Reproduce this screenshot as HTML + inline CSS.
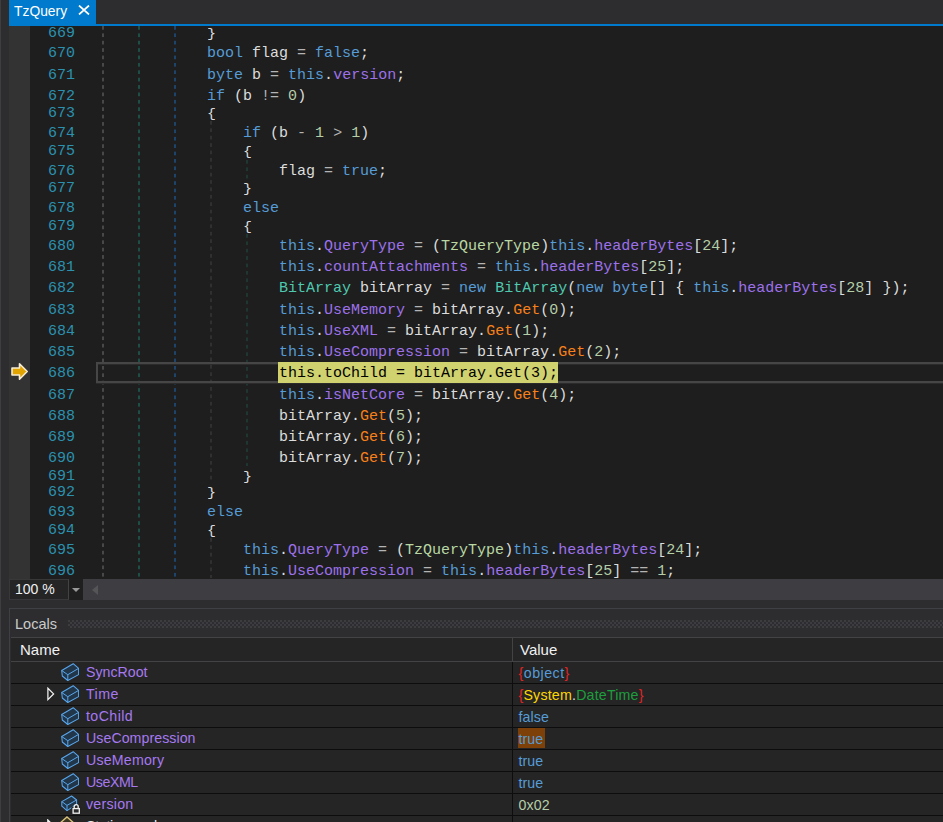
<!DOCTYPE html>
<html><head><meta charset="utf-8"><title>TzQuery</title>
<style>
html,body{margin:0;padding:0;}
body{width:943px;height:822px;overflow:hidden;background:#2d2d30;position:relative;font-family:"Liberation Sans",sans-serif;}
i{font-style:normal}
#edge{position:absolute;left:0;top:0;width:1px;height:822px;background:#3e3e42}
#tab{position:absolute;left:9px;top:0;width:87px;height:24px;background:#007acc;color:#fff;font-size:14.5px;line-height:22px;}
#tab span{position:absolute;left:5px;top:0px;transform:scaleX(.955);transform-origin:0 50%}
#tabx{position:absolute;left:69px;top:5px;width:12px;height:10px}
#tabline{position:absolute;left:9px;top:24px;width:934px;height:2px;background:#007acc}
#gutter{position:absolute;left:9px;top:26px;width:21px;height:553px;background:#333333}
#code{position:absolute;left:30px;top:26px;width:913px;height:553px;background:#1e1e1e}
.ln,.cl{position:absolute;font-family:"Liberation Mono",monospace;font-size:15px;line-height:20px;height:20px;white-space:pre;}
.ln{left:48px;color:#2b91af}
.cl{color:#dcdcdc}
.b{display:inline-block;transform:scaleY(.88);transform-origin:50% 80%}
.k{color:#569cd6}.p{color:#dcdcdc}.o{color:#b4b4b4}.n{color:#b5cea8}.f{color:#9d71ea}.m{color:#f8801a}.c{color:#4ec9b0}.e{color:#b8d7a3}.l{color:#dcdcdc}
.g{position:absolute;width:2px;background-size:2px 7.4px}
.g1{background-image:linear-gradient(#484848 0,#484848 3.9px,transparent 3.9px)}
.g2{background-image:linear-gradient(#1d4f47 0,#1d4f47 3.9px,transparent 3.9px)}
.g3{background-image:linear-gradient(#1d446a 0,#1d446a 3.9px,transparent 3.9px)}
.g4{background-image:linear-gradient(#303030 0,#303030 3.9px,transparent 3.9px)}
.g5{background-image:linear-gradient(#1f3632 0,#1f3632 3.9px,transparent 3.9px)}
#curline{position:absolute;left:96px;top:362px;width:860px;height:17px;border:2px solid #464646;box-shadow:inset 0 1px 0 #2b2b2b,0 1px 0 #2b2b2b;}
.hl{position:absolute;top:362px;height:21px;background:#d0d16f}
.hlt{color:#000}
#arrow{position:absolute;left:10px;top:362px;width:19px;height:19px}
/* zoom bar */
#zoombox{position:absolute;left:9px;top:579px;width:58px;height:19px;background:#252526;border:1px solid #38383b;border-right-color:#434346;color:#f1f1f1;font-size:14px;line-height:19px}
#zoombox span{position:absolute;left:5px;top:0}
#zoomdd{position:absolute;left:69px;top:579px;width:14px;height:21px;background:#1f1f20}
#zoomdd:after{content:"";position:absolute;left:3px;top:9px;border:4px solid transparent;border-top:4px solid #999;border-bottom:0}
#hscroll{position:absolute;left:83px;top:579px;width:860px;height:21px;background:#3e3e42}
#hscroll:after{content:"";position:absolute;left:9px;top:6px;border:5px solid transparent;border-right:6px solid #555558;border-left:0}
/* locals */
#locals{position:absolute;left:9px;top:608px;width:940px;height:230px;border:1px solid #3f3f46;background:#2d2d30;box-sizing:border-box}
#ltitle{position:absolute;left:15px;top:613px;font-size:14.5px;line-height:22px;color:#cacaca}
#grip{position:absolute;left:68px;top:620px;width:880px;height:8px;background-image:radial-gradient(circle at 1px 1px,#5a5a5f 0.6px,transparent 1.0px),radial-gradient(circle at 3px 3px,#5a5a5f 0.6px,transparent 1.0px);background-size:4px 4px;opacity:.5}
#table{position:absolute;left:11px;top:637px;width:940px;height:190px;background:#252526}
#hdr{position:absolute;left:11px;top:637px;width:940px;height:23px;border-top:1px solid #434345;border-bottom:1px solid #434345;background:#252526;color:#f1f1f1;font-size:15px;line-height:24px}
#hdr .h1{position:absolute;left:9px;top:0}
#hdr .h2{position:absolute;left:509px;top:0}
#hdr .sep{position:absolute;left:501px;top:0;width:1px;height:23px;background:#434345}
.row{position:absolute;left:11px;width:940px;height:21px;border-bottom:1px solid #0d0d0d;font-size:14.2px;line-height:21px;white-space:nowrap}
.row .ic{position:absolute;left:50px;top:1px;width:18px;height:18px}
.row .tri{position:absolute;left:36px;top:2.5px;width:8px;height:14px}
.row .nm{position:absolute;left:75px;top:0;color:#a679f0}
.row .val{position:absolute;left:507.5px;top:1px}
#colsep{position:absolute;left:512px;top:662px;width:1px;height:170px;background:#0d0d0d}
.br{color:#e02424}.ns{color:#ffd700}.vt{color:#1e9e3c}
.chg{background:#7c4008;display:inline-block;height:20px;padding:0 1.5px 0 1px;margin-left:-1px;margin-top:-1px;vertical-align:top;line-height:22px}
</style></head><body>
<div id="edge"></div>
<div id="code"></div>
<div id="gutter"></div>
<div id="tab"><span>TzQuery</span><svg id="tabx" viewBox="0 0 12 10"><path d="M1 0.5 L11 9.5 M11 0.5 L1 9.5" stroke="#fff" stroke-width="1.7" fill="none"/></svg></div>
<div id="tabline"></div>
<div class="g g1" style="left:102px;top:26px;height:552px"></div>
<div class="g g2" style="left:138px;top:26px;height:552px"></div>
<div class="g g3" style="left:174px;top:26px;height:552px"></div>
<div class="g g4" style="left:210px;top:121px;height:361px"></div>
<div class="g g4" style="left:210px;top:538px;height:40px"></div>
<div class="g g5" style="left:246px;top:160px;height:19px"></div>
<div class="g g5" style="left:246px;top:234px;height:232px"></div>
<div id="curline"></div>
<div class="ln" style="top:24.0px">669</div>
<div class="cl" style="top:24.0px;left:207.0px"><i class="p b">}</i></div>
<div class="ln" style="top:44.0px">670</div>
<div class="cl" style="top:44.0px;left:207.0px"><i class="k">bool</i> <i class="l">flag</i> <i class="o">=</i> <i class="k">false</i><i class="p">;</i></div>
<div class="ln" style="top:66.0px">671</div>
<div class="cl" style="top:66.0px;left:207.0px"><i class="k">byte</i> <i class="l">b</i> <i class="o">=</i> <i class="k">this</i><i class="p">.</i><i class="f">version</i><i class="p">;</i></div>
<div class="ln" style="top:87.0px">672</div>
<div class="cl" style="top:87.0px;left:207.0px"><i class="k">if</i> <i class="p">(</i><i class="l">b</i> <i class="o">!=</i> <i class="n">0</i><i class="p">)</i></div>
<div class="ln" style="top:104.0px">673</div>
<div class="cl" style="top:104.0px;left:207.0px"><i class="p b">{</i></div>
<div class="ln" style="top:124.0px">674</div>
<div class="cl" style="top:124.0px;left:243.0px"><i class="k">if</i> <i class="p">(</i><i class="l">b</i> <i class="o">-</i> <i class="n">1</i> <i class="o">&gt;</i> <i class="n">1</i><i class="p">)</i></div>
<div class="ln" style="top:142.0px">675</div>
<div class="cl" style="top:142.0px;left:243.0px"><i class="p b">{</i></div>
<div class="ln" style="top:162.0px">676</div>
<div class="cl" style="top:162.0px;left:279.0px"><i class="l">flag</i> <i class="o">=</i> <i class="k">true</i><i class="p">;</i></div>
<div class="ln" style="top:179.0px">677</div>
<div class="cl" style="top:179.0px;left:243.0px"><i class="p b">}</i></div>
<div class="ln" style="top:199.0px">678</div>
<div class="cl" style="top:199.0px;left:243.0px"><i class="k">else</i></div>
<div class="ln" style="top:217.0px">679</div>
<div class="cl" style="top:217.0px;left:243.0px"><i class="p b">{</i></div>
<div class="ln" style="top:237.0px">680</div>
<div class="cl" style="top:237.0px;left:279.0px"><i class="k">this</i><i class="p">.</i><i class="f">QueryType</i> <i class="o">=</i> <i class="p">(</i><i class="e">TzQueryType</i><i class="p">)</i><i class="k">this</i><i class="p">.</i><i class="f">headerBytes</i><i class="p">[</i><i class="n">24</i><i class="p">]</i><i class="p">;</i></div>
<div class="ln" style="top:258.0px">681</div>
<div class="cl" style="top:258.0px;left:279.0px"><i class="k">this</i><i class="p">.</i><i class="f">countAttachments</i> <i class="o">=</i> <i class="k">this</i><i class="p">.</i><i class="f">headerBytes</i><i class="p">[</i><i class="n">25</i><i class="p">]</i><i class="p">;</i></div>
<div class="ln" style="top:279.0px">682</div>
<div class="cl" style="top:279.0px;left:279.0px"><i class="c">BitArray</i> <i class="l">bitArray</i> <i class="o">=</i> <i class="k">new</i> <i class="c">BitArray</i><i class="p">(</i><i class="k">new</i> <i class="k">byte</i><i class="p">[]</i> <i class="p">{</i> <i class="k">this</i><i class="p">.</i><i class="f">headerBytes</i><i class="p">[</i><i class="n">28</i><i class="p">]</i> <i class="p">});</i></div>
<div class="ln" style="top:301.0px">683</div>
<div class="cl" style="top:301.0px;left:279.0px"><i class="k">this</i><i class="p">.</i><i class="f">UseMemory</i> <i class="o">=</i> <i class="l">bitArray</i><i class="p">.</i><i class="m">Get</i><i class="p">(</i><i class="n">0</i><i class="p">);</i></div>
<div class="ln" style="top:322.0px">684</div>
<div class="cl" style="top:322.0px;left:279.0px"><i class="k">this</i><i class="p">.</i><i class="f">UseXML</i> <i class="o">=</i> <i class="l">bitArray</i><i class="p">.</i><i class="m">Get</i><i class="p">(</i><i class="n">1</i><i class="p">);</i></div>
<div class="ln" style="top:343.0px">685</div>
<div class="cl" style="top:343.0px;left:279.0px"><i class="k">this</i><i class="p">.</i><i class="f">UseCompression</i> <i class="o">=</i> <i class="l">bitArray</i><i class="p">.</i><i class="m">Get</i><i class="p">(</i><i class="n">2</i><i class="p">);</i></div>
<div class="ln" style="top:364.0px">686</div>
<div class="hl" style="left:278.0px;width:279.5px"></div>
<div class="cl hlt" style="top:364.0px;left:279.0px">this.toChild = bitArray.Get(3);</div>
<div class="ln" style="top:386.0px">687</div>
<div class="cl" style="top:386.0px;left:279.0px"><i class="k">this</i><i class="p">.</i><i class="f">isNetCore</i> <i class="o">=</i> <i class="l">bitArray</i><i class="p">.</i><i class="m">Get</i><i class="p">(</i><i class="n">4</i><i class="p">);</i></div>
<div class="ln" style="top:407.0px">688</div>
<div class="cl" style="top:407.0px;left:279.0px"><i class="l">bitArray</i><i class="p">.</i><i class="m">Get</i><i class="p">(</i><i class="n">5</i><i class="p">);</i></div>
<div class="ln" style="top:428.0px">689</div>
<div class="cl" style="top:428.0px;left:279.0px"><i class="l">bitArray</i><i class="p">.</i><i class="m">Get</i><i class="p">(</i><i class="n">6</i><i class="p">);</i></div>
<div class="ln" style="top:449.0px">690</div>
<div class="cl" style="top:449.0px;left:279.0px"><i class="l">bitArray</i><i class="p">.</i><i class="m">Get</i><i class="p">(</i><i class="n">7</i><i class="p">);</i></div>
<div class="ln" style="top:467.0px">691</div>
<div class="cl" style="top:467.0px;left:243.0px"><i class="p b">}</i></div>
<div class="ln" style="top:483.0px">692</div>
<div class="cl" style="top:483.0px;left:207.0px"><i class="p b">}</i></div>
<div class="ln" style="top:503.0px">693</div>
<div class="cl" style="top:503.0px;left:207.0px"><i class="k">else</i></div>
<div class="ln" style="top:521.0px">694</div>
<div class="cl" style="top:521.0px;left:207.0px"><i class="p b">{</i></div>
<div class="ln" style="top:541.0px">695</div>
<div class="cl" style="top:541.0px;left:243.0px"><i class="k">this</i><i class="p">.</i><i class="f">QueryType</i> <i class="o">=</i> <i class="p">(</i><i class="e">TzQueryType</i><i class="p">)</i><i class="k">this</i><i class="p">.</i><i class="f">headerBytes</i><i class="p">[</i><i class="n">24</i><i class="p">]</i><i class="p">;</i></div>
<div class="ln" style="top:562.0px">696</div>
<div class="cl" style="top:562.0px;left:243.0px"><i class="k">this</i><i class="p">.</i><i class="f">UseCompression</i> <i class="o">=</i> <i class="k">this</i><i class="p">.</i><i class="f">headerBytes</i><i class="p">[</i><i class="n">25</i><i class="p">]</i> <i class="o">==</i> <i class="n">1</i><i class="p">;</i></div>
<svg id="arrow" viewBox="0 0 19 19"><path d="M2 6 H9.5 V1.8 L17.2 9.5 L9.5 17.2 V13 H2 Z" fill="#e2a400" stroke="#f6ecd2" stroke-width="1.6" stroke-linejoin="round"/></svg>
<div id="zoombox"><span>100 %</span></div><div id="zoomdd"></div><div id="hscroll"></div>
<div id="locals"></div>
<div id="ltitle">Locals</div><div id="grip"></div>
<div id="table"></div>
<div id="hdr"><span class="h1">Name</span><span class="sep"></span><span class="h2">Value</span></div>
<div class="row" style="top:662px"><svg class="ic" viewBox="0 0 18 18"><path d="M0.7 7.5 L12.2 0.7 L17.6 5.4 L17.6 11.6 L6.8 17.5 L1.3 13.0 Z" fill="#223649" stroke="#58a7ee" stroke-width="1.05" stroke-linejoin="round"/><path d="M0.7 7.5 L6.8 11.7 L17.6 5.4 M6.8 11.7 L6.8 17.5" fill="none" stroke="#58a7ee" stroke-width="1.0" stroke-linejoin="round"/></svg><span class="nm" style="letter-spacing:0px">SyncRoot</span><span class="val" style="letter-spacing:0.5px"><i class="br">{</i><i class="k">object</i><i class="br">}</i></span></div>
<div class="row" style="top:684px"><svg class="tri" viewBox="0 0 8 14"><path d="M0.9 1.2 L6.6 6.9 L0.9 12.6 Z" fill="none" stroke="#f1f1f1" stroke-width="1.25"/></svg><svg class="ic" viewBox="0 0 18 18"><path d="M0.7 7.5 L12.2 0.7 L17.6 5.4 L17.6 11.6 L6.8 17.5 L1.3 13.0 Z" fill="#223649" stroke="#58a7ee" stroke-width="1.05" stroke-linejoin="round"/><path d="M0.7 7.5 L6.8 11.7 L17.6 5.4 M6.8 11.7 L6.8 17.5" fill="none" stroke="#58a7ee" stroke-width="1.0" stroke-linejoin="round"/></svg><span class="nm" style="letter-spacing:0.45px">Time</span><span class="val" style="letter-spacing:0.2px"><i class="br">{</i><i class="ns">System</i><i class="p">.</i><i class="vt">DateTime</i><i class="br">}</i></span></div>
<div class="row" style="top:706px"><svg class="ic" viewBox="0 0 18 18"><path d="M0.7 7.5 L12.2 0.7 L17.6 5.4 L17.6 11.6 L6.8 17.5 L1.3 13.0 Z" fill="#223649" stroke="#58a7ee" stroke-width="1.05" stroke-linejoin="round"/><path d="M0.7 7.5 L6.8 11.7 L17.6 5.4 M6.8 11.7 L6.8 17.5" fill="none" stroke="#58a7ee" stroke-width="1.0" stroke-linejoin="round"/></svg><span class="nm" style="letter-spacing:0.42px">toChild</span><span class="val" style="letter-spacing:0.1px"><i class="k">false</i></span></div>
<div class="row" style="top:728px"><svg class="ic" viewBox="0 0 18 18"><path d="M0.7 7.5 L12.2 0.7 L17.6 5.4 L17.6 11.6 L6.8 17.5 L1.3 13.0 Z" fill="#223649" stroke="#58a7ee" stroke-width="1.05" stroke-linejoin="round"/><path d="M0.7 7.5 L6.8 11.7 L17.6 5.4 M6.8 11.7 L6.8 17.5" fill="none" stroke="#58a7ee" stroke-width="1.0" stroke-linejoin="round"/></svg><span class="nm" style="letter-spacing:0.05px">UseCompression</span><span class="val" style="letter-spacing:0.1px"><i class="k chg">true</i></span></div>
<div class="row" style="top:750px"><svg class="ic" viewBox="0 0 18 18"><path d="M0.7 7.5 L12.2 0.7 L17.6 5.4 L17.6 11.6 L6.8 17.5 L1.3 13.0 Z" fill="#223649" stroke="#58a7ee" stroke-width="1.05" stroke-linejoin="round"/><path d="M0.7 7.5 L6.8 11.7 L17.6 5.4 M6.8 11.7 L6.8 17.5" fill="none" stroke="#58a7ee" stroke-width="1.0" stroke-linejoin="round"/></svg><span class="nm" style="letter-spacing:0.2px">UseMemory</span><span class="val" style="letter-spacing:0.1px"><i class="k">true</i></span></div>
<div class="row" style="top:772px"><svg class="ic" viewBox="0 0 18 18"><path d="M0.7 7.5 L12.2 0.7 L17.6 5.4 L17.6 11.6 L6.8 17.5 L1.3 13.0 Z" fill="#223649" stroke="#58a7ee" stroke-width="1.05" stroke-linejoin="round"/><path d="M0.7 7.5 L6.8 11.7 L17.6 5.4 M6.8 11.7 L6.8 17.5" fill="none" stroke="#58a7ee" stroke-width="1.0" stroke-linejoin="round"/></svg><span class="nm" style="letter-spacing:-0.45px">UseXML</span><span class="val" style="letter-spacing:0.1px"><i class="k">true</i></span></div>
<div class="row" style="top:794px"><svg class="ic" viewBox="0 0 20 20" style="width:20px;height:20px"><path d="M0.8 6.6 L10.6 1.0 L15.6 5.0 L15.6 9.4 L6.0 15.6 L0.8 11.2 Z" fill="#223649" stroke="#58a7ee" stroke-width="1.05" stroke-linejoin="round"/><path d="M0.8 6.6 L6.0 10.4 L15.6 5.0 M6.0 10.4 L6.0 15.6" fill="none" stroke="#58a7ee" stroke-width="1.0"/><rect x="10.4" y="11.6" width="9" height="8" fill="#252526"/><path d="M13.2 13.4 V11.6 a2 2 0 0 1 4 0 V13.4" fill="none" stroke="#f0f0f0" stroke-width="1.3"/><rect x="12.1" y="13.6" width="6.2" height="4.6" fill="#2a2a2a" stroke="#f0f0f0" stroke-width="1.3"/></svg><span class="nm" style="letter-spacing:0.25px">version</span><span class="val" style="letter-spacing:0.1px"><i class="n">0x02</i></span></div>
<div id="colsep"></div>
<div class="row" style="top:816px;border:0">
<svg class="tri" viewBox="0 0 8 14"><path d="M0.8 0.9 L6.9 7 L0.8 13.1 Z" fill="none" stroke="#f1f1f1" stroke-width="1.3"/></svg>
<svg class="ic" style="left:47px;top:0" viewBox="0 0 18 18"><path d="M9 1 L17 8 L9 16 L1 8 Z" fill="#3a3420" stroke="#d8c27a" stroke-width="1.4"/></svg>
<span class="nm" style="color:#e8e8e8;top:0px;letter-spacing:-0.3px">Static members</span></div>
</body></html>
